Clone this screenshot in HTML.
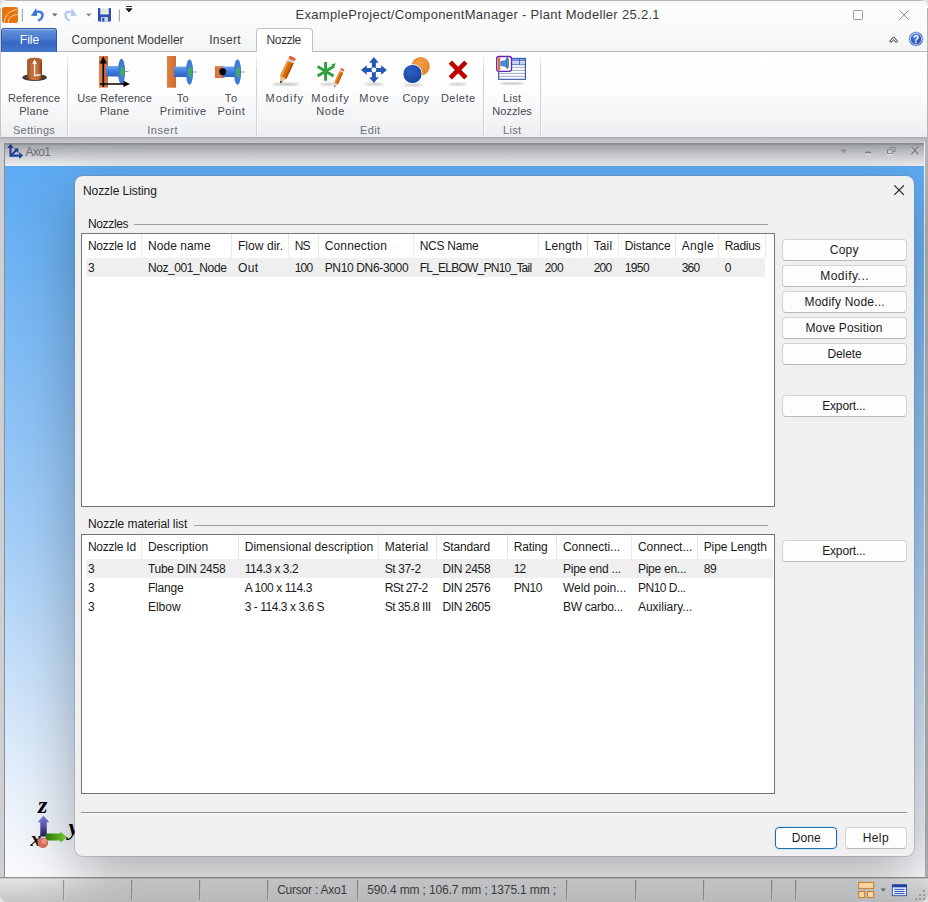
<!DOCTYPE html>
<html>
<head>
<meta charset="utf-8">
<title>Plant Modeller - Nozzle Listing</title>
<style>
*{box-sizing:border-box;margin:0;padding:0}
html,body{width:928px;height:902px;overflow:hidden;background:#dfe1e4;font-family:"Liberation Sans",sans-serif;font-size:12px;color:#1a1a1a}
.a{position:absolute}
.t{position:absolute;white-space:pre;line-height:14px;height:14px}
#win{left:0;top:0;width:928px;height:902px;overflow:hidden;border-radius:8px}
#titlebar{left:0;top:0;width:928px;height:29px;background:linear-gradient(#f6f6f6,#fcfcfc 25%,#fafafa)}
#topline{left:0;top:0;width:928px;height:1px;background:#b5b5b5}
#tabrow{left:0;top:29px;width:928px;height:22px;background:linear-gradient(#fafafa,#f3f4f6)}
#tabline{left:0;top:51px;width:928px;height:1px;background:#b6b9bd}
#filetab{left:1px;top:28px;width:56px;height:23.500px;border-radius:3px 3px 0 0;background:linear-gradient(#6593dc,#4a7cd0 40%,#3766c0 60%,#4377cd);border:1px solid #2f5aa6;border-bottom:none;box-shadow:inset 0 1px 0 rgba(255,255,255,.35)}
#acttab{left:256px;top:28px;width:57px;height:24px;border-radius:4px 4px 0 0;background:#fff;border:1px solid #bfc3c9;border-bottom:none}
#ribbon{left:0;top:52px;width:928px;height:85px;background:linear-gradient(#ffffff,#fdfdfe 45%,#f3f4f6 80%,#eceef1)}
.sep{width:2px;top:53px;height:83px;background:linear-gradient(90deg,#d0d3d7 50%,#fbfbfc 50%);-webkit-mask-image:linear-gradient(transparent,#000 25%);mask-image:linear-gradient(transparent,#000 25%)}
#band{left:0;top:137px;width:928px;height:6px;background:linear-gradient(#a4a6a9,#bdbfc2 35%,#c8cacd)}
#frame{left:0;top:143px;width:928px;height:735px;background:#cdcfd2}
#fl{left:4px;top:143px;width:1px;height:734px;background:#8a8d91}
#fr{left:923.5px;top:142px;width:1.8px;height:735px;background:#f3f4f5}
#frr{left:925.3px;top:137px;width:2.7px;height:740px;background:#b2b4b6}
#fl0{left:0;top:8px;width:1px;height:130px;background:#c6c6c6}
#fr2{left:927px;top:8px;width:1px;height:130px;background:#b4b4b4}
#axobar{left:5px;top:143px;width:918.5px;height:23px;background:linear-gradient(#83868a,#8f9296 6%,#a6a9ad 12%,#c2c4c8 45%,#dedfe2 78%,#ebecee)}
#view{left:5px;top:166px;width:918.5px;height:711px;background:linear-gradient(#5eabf3,#64aef3 6%,#a3cdf7 52%,#ebf2fb 90%,#fafbfd)}
#clip{left:5px;top:166px;width:918.5px;height:711px}
#dlg{left:70px;top:10px;width:838.5px;height:680px;background:#f0f0f0;border-radius:8px;box-shadow:0 0 0 1px rgba(110,120,135,.30),0 22px 60px rgba(0,0,0,.31)}
.list{background:#fff;border:1px solid #767676}
.hsep{width:1px;background:#e9e9e9}
.hl{background:#efefef;border-radius:2px}
.gline{height:1px;background:#a0a0a0}
.btn{background:#fdfdfd;border:1px solid #d2d2d2;border-bottom-color:#b9b9b9;border-radius:4px;height:22px}
.btn.def{border:1px solid #2a6da6;box-shadow:0 0 0 1px rgba(185,232,255,.75)}
#vb{left:5px;top:875.5px;width:918.5px;height:1.5px;background:rgba(255,255,255,.4)}
#status{left:0;top:877px;width:928px;height:25px;background:linear-gradient(#8f9194,#909295 4%,#e3e5e7 7%,#d3d5d7 50%,#c3c5c7)}
.ssep{top:880px;width:2px;height:20px;background:linear-gradient(90deg,#96999c 50%,#d2d4d6 50%)}
</style>
</head>
<body>
<div class="a" id="win">
<div class="a" id="titlebar"></div>
<div class="a" id="tabrow"></div>
<div class="a" id="tabline"></div>
<div class="a" id="filetab"></div>
<div class="a" id="acttab"></div>
<div class="a" id="ribbon"></div>
<div class="a sep" style="left:67px"></div>
<div class="a sep" style="left:256px"></div>
<div class="a sep" style="left:483px"></div>
<div class="a sep" style="left:540px"></div>
<div class="a" id="band"></div>
<div class="a" id="frame"></div>
<div class="a" id="fl"></div><div class="a" id="fr"></div><div class="a" id="fr2"></div><div class="a" id="frr"></div><div class="a" id="fl0"></div>
<div class="a" id="axobar"></div>
<div class="a" id="view"></div>
<svg class="a" style="left:0;top:780px" width="100" height="90" viewBox="0 780 100 90">
<defs>
<linearGradient id="gZ" x1="0" y1="0" x2="0" y2="1"><stop offset="0" stop-color="#8a80e0"/><stop offset=".5" stop-color="#5a52b0"/><stop offset="1" stop-color="#1e1a50"/></linearGradient>
<linearGradient id="gY" x1="0" y1="0" x2="1" y2="0"><stop offset="0" stop-color="#2e7a0a"/><stop offset=".6" stop-color="#5cb820"/><stop offset="1" stop-color="#9ade4a"/></linearGradient>
</defs>
<text x="38" y="812.900" font-family="Liberation Serif, serif" font-style="italic" font-weight="bold" font-size="24" fill="#000">z</text>
<path d="M43.500 815.600l5.700 6.700h-2.400v14.200h-6.500v-14.200h-2.500z" fill="url(#gZ)"/>
<text x="30.500" y="846" font-family="Liberation Serif, serif" font-style="italic" font-weight="bold" font-size="22" fill="#1a0a0a">x</text>
<path d="M45.600 833.500h14.700v-1.800l7 5.600-7 5.500v-2.400H45.600z" fill="url(#gY)"/>
<text x="68.500" y="835.200" font-family="Liberation Serif, serif" font-style="italic" font-weight="bold" font-size="24" fill="#000">y</text>
<circle cx="42.800" cy="842.800" r="5.300" fill="#d8705e"/>
<circle cx="44" cy="841.300" r="2.800" fill="#f09a84"/>
</svg>


<div class="a" id="vb"></div>
<div class="a" id="status"></div>
<div class="a ssep" style="left:63px"></div>
<div class="a ssep" style="left:131px"></div>
<div class="a ssep" style="left:199px"></div>
<div class="a ssep" style="left:267px"></div>
<div class="a ssep" style="left:357px"></div>
<div class="a ssep" style="left:566px"></div>
<div class="a ssep" style="left:634.5px"></div>
<div class="a ssep" style="left:702.5px"></div>
<div class="a ssep" style="left:770.5px"></div>
<div class="a ssep" style="left:795px"></div>
<div class="a" id="clip"><div class="a" id="dlg"></div></div>

<!-- Nozzles group -->
<div class="a gline" style="left:134px;top:224px;width:634px"></div>
<div class="a list" style="left:81px;top:233px;width:694px;height:274px"></div>
<div class="a hl" style="left:86px;top:258px;width:679px;height:19px"></div>
<div class="a hsep" style="left:141px;top:234px;height:24px"></div>
<div class="a hsep" style="left:231px;top:234px;height:24px"></div>
<div class="a hsep" style="left:288px;top:234px;height:24px"></div>
<div class="a hsep" style="left:318px;top:234px;height:24px"></div>
<div class="a hsep" style="left:413px;top:234px;height:24px"></div>
<div class="a hsep" style="left:538px;top:234px;height:24px"></div>
<div class="a hsep" style="left:587px;top:234px;height:24px"></div>
<div class="a hsep" style="left:618px;top:234px;height:24px"></div>
<div class="a hsep" style="left:675px;top:234px;height:24px"></div>
<div class="a hsep" style="left:718px;top:234px;height:24px"></div>
<div class="a hsep" style="left:765px;top:234px;height:24px"></div>

<!-- Nozzle material list group -->
<div class="a gline" style="left:193.5px;top:525px;width:574.5px"></div>
<div class="a list" style="left:81px;top:534px;width:694px;height:260px"></div>
<div class="a hl" style="left:86px;top:559px;width:687px;height:19px"></div>
<div class="a hsep" style="left:141px;top:535px;height:23.5px"></div>
<div class="a hsep" style="left:238px;top:535px;height:23.5px"></div>
<div class="a hsep" style="left:378px;top:535px;height:23.5px"></div>
<div class="a hsep" style="left:436px;top:535px;height:23.5px"></div>
<div class="a hsep" style="left:507px;top:535px;height:23.5px"></div>
<div class="a hsep" style="left:556px;top:535px;height:23.5px"></div>
<div class="a hsep" style="left:631px;top:535px;height:23.5px"></div>
<div class="a hsep" style="left:697px;top:535px;height:23.5px"></div>

<!-- buttons -->
<div class="a btn" style="left:782px;top:239px;width:125px"></div>
<div class="a btn" style="left:782px;top:265px;width:125px"></div>
<div class="a btn" style="left:782px;top:291px;width:125px"></div>
<div class="a btn" style="left:782px;top:317px;width:125px"></div>
<div class="a btn" style="left:782px;top:343px;width:125px"></div>
<div class="a btn" style="left:782px;top:395px;width:125px"></div>
<div class="a btn" style="left:782px;top:540px;width:125px"></div>
<div class="a gline" style="left:81px;top:812px;width:826px;background:#8e8e8e"></div>
<div class="a gline" style="left:81px;top:813px;width:826px;background:#fbfbfb"></div>
<div class="a btn def" style="left:775px;top:827px;width:62px;height:22px"></div>
<div class="a btn" style="left:845px;top:827px;width:62px;height:22px"></div>

<svg class="a" style="left:0;top:0" width="928" height="902" viewBox="0 0 928 902">
<defs>
<linearGradient id="gPipe" x1="0" y1="0" x2="0" y2="1"><stop offset="0" stop-color="#6fa2ee"/><stop offset=".45" stop-color="#3f7fe0"/><stop offset="1" stop-color="#2f62c0"/></linearGradient>
<linearGradient id="gOr" x1="0" y1="0" x2="1" y2="0"><stop offset="0" stop-color="#e08044"/><stop offset="1" stop-color="#cf6a32"/></linearGradient>
<linearGradient id="gCyl" x1="0" y1="0" x2="1" y2="0"><stop offset="0" stop-color="#8a4a22"/><stop offset=".3" stop-color="#c8723a"/><stop offset=".7" stop-color="#c87038"/><stop offset="1" stop-color="#7a3e1c"/></linearGradient>
<linearGradient id="gZ" x1="0" y1="0" x2="0" y2="1"><stop offset="0" stop-color="#8a80e0"/><stop offset=".5" stop-color="#5a52b0"/><stop offset="1" stop-color="#1e1a50"/></linearGradient>
<linearGradient id="gY" x1="0" y1="0" x2="1" y2="0"><stop offset="0" stop-color="#2e7a0a"/><stop offset=".6" stop-color="#5cb820"/><stop offset="1" stop-color="#9ade4a"/></linearGradient>
<radialGradient id="gHelp" cx=".4" cy=".3" r=".8"><stop offset="0" stop-color="#4a7fe8"/><stop offset="1" stop-color="#123a9c"/></radialGradient>
<radialGradient id="gBlue" cx=".4" cy=".35" r=".8"><stop offset="0" stop-color="#2c62c4"/><stop offset="1" stop-color="#163e94"/></radialGradient>
<radialGradient id="gOrC" cx=".45" cy=".35" r=".8"><stop offset="0" stop-color="#f6a04a"/><stop offset="1" stop-color="#e07a1c"/></radialGradient>
<filter id="blur1"><feGaussianBlur stdDeviation="0.9"/></filter>
<g id="nozzle">
  <rect x="9" y="10.6" width="13" height="10.4" fill="url(#gPipe)"/>
  <ellipse cx="24.5" cy="16" rx="3.6" ry="12.8" fill="#3f7ad8"/>
  <ellipse cx="25.3" cy="16" rx="1.8" ry="5.6" fill="#3fb05a"/>
  <path d="M28 16h3.6" stroke="#8fae7a" stroke-width="1"/>
</g>
</defs>

<!-- quick access toolbar -->
<rect x="2" y="7" width="16" height="16" rx="2.2" fill="#e8740e"/>
<path d="M4.2 22.5C4.6 15.5 9 10.8 16.5 9.6M8.2 22.5c.3-4.6 3.2-7.4 9.3-8" fill="none" stroke="#ffd9a8" stroke-width="1" stroke-linecap="round"/>
<path d="M22.3 9v12.5" stroke="#9a9a9a" stroke-width="1"/>
<path d="M119.3 9.5v12" stroke="#9a9a9a" stroke-width="1"/>
<path d="M30.900 15.700l5.300-7.600.9 7.900z" fill="#3873da"/>
<path d="M35.600 12.300c3.900-1.800 7.100.2 6.900 3.200-.1 2.100-1.400 3.700-3.600 4.800" stroke="#3b76dc" stroke-width="2.400" fill="none" stroke-linecap="round"/>
<path d="M77 15.700l-5.300-7.600-.9 7.900z" fill="#b4c9f0"/>
<path d="M72.300 12.300c-3.900-1.800-7.100.2-6.900 3.200.1 2.100 1.400 3.700 3.600 4.800" stroke="#b9cdf2" stroke-width="2.400" fill="none" stroke-linecap="round"/>
<path d="M52 13.400h5.600l-2.800 3z" fill="#6b6b6b"/>
<path d="M86 13.400h5.600l-2.800 3z" fill="#8b8b8b"/>
<rect x="98" y="8" width="13" height="13.600" rx=".8" fill="#2f4fb0"/>
<rect x="100.300" y="8" width="8.400" height="6.400" fill="#f2f2ee"/>
<path d="M100.300 10h8.400M100.300 12h8.400" stroke="#c9d2a8" stroke-width=".7"/>
<rect x="101" y="17" width="7" height="4.600" fill="#c9d3ee"/>
<rect x="102.300" y="17.800" width="2" height="3.800" fill="#2f4fb0"/>
<path d="M126 6.500h6M126 8.700h6l-3 3.300z" fill="#222" stroke="#222" stroke-width=".9"/>

<!-- window buttons -->
<rect x="853.500" y="10.500" width="9" height="9" rx=".8" fill="none" stroke="#9c9c9c" stroke-width="1"/>
<path d="M899.300 10.200l9.600 9.600M908.900 10.200l-9.600 9.600" stroke="#8a8a8a" stroke-width="1"/>
<path d="M889.600 41.200l4-4.300 4 4.300-1.300 1.300-2.700-2.600-2.700 2.600z" fill="#fff" stroke="#222" stroke-width="1" stroke-linejoin="round"/>
<circle cx="916" cy="39" r="7" fill="url(#gHelp)" stroke="#9db8ee" stroke-width=".8"/>
<circle cx="916" cy="39" r="5.700" fill="none" stroke="#e8eefc" stroke-width=".8"/>
<text x="916" y="43" text-anchor="middle" font-family="Liberation Sans, sans-serif" font-weight="bold" font-size="10.500" fill="#fff">?</text>

<!-- Reference plane (hat) -->
<ellipse cx="34.600" cy="77.500" rx="12.300" ry="3.400" fill="#3c3c3c"/>
<path d="M27.200 60.500a7.400 2.700 0 0 1 14.800 0v17a7.400 2.700 0 0 1-14.800 0z" fill="url(#gCyl)"/>
<ellipse cx="34.600" cy="60.500" rx="7.400" ry="2.700" fill="#b0622e"/>
<path d="M34.600 76.300V63M34.600 75.700l6-1" stroke="#fff" stroke-width="1.200" fill="none"/>
<path d="M32.200 63.800l2.400-4.400 2.400 4.400z" fill="#fff"/>

<!-- Use reference plane -->
<rect x="99" y="56" width="9" height="31.600" fill="url(#gOr)"/>
<use href="#nozzle" x="97" y="55.500"/>
<path d="M103.300 87V61M100 84h25" stroke="#000" stroke-width="1.700"/>
<path d="M99.600 63.600l3.600-7.400 3.600 7.400z" fill="#000"/>
<path d="M123.400 80.800l6.600 3.200-6.600 3z" fill="#000"/>

<!-- To primitive -->
<rect x="167" y="56" width="9" height="31.700" fill="url(#gOr)"/>
<use href="#nozzle" x="165" y="56"/>
<!-- To point -->
<rect x="215" y="66.200" width="9.500" height="11.800" fill="#dc7440"/>
<use href="#nozzle" x="213" y="56"/>
<circle cx="222.700" cy="71.700" r="3.400" fill="#000"/>

<!-- Modify pencil -->
<ellipse cx="286" cy="84.300" rx="13.500" ry="1.300" fill="#b9b9b9" filter="url(#blur1)"/>
<g transform="translate(280.300 83.600) rotate(25.200)">
  <path d="M0 0l-3.500-7h7z" fill="#e6c08e"/><path d="M0 0l-1.200-2.500h2.400z" fill="#1a1a1a"/>
  <rect x="-3.500" y="-24" width="7" height="17" fill="#d36c0c"/>
  <rect x="-3.500" y="-24" width="2" height="17" fill="#ee9838"/><rect x="1.700" y="-24" width="1.800" height="17" fill="#a85206"/>
  <rect x="-3.500" y="-26.200" width="7" height="2.200" fill="#d4d4d4"/>
  <rect x="-3.500" y="-29.500" width="7" height="3.300" rx="1.200" fill="#e85a3a"/>
</g>
<!-- Modify node -->
<ellipse cx="328" cy="84.300" rx="8" ry="1.200" fill="#c4c4c4" filter="url(#blur1)"/>
<g stroke="#2fa03a" stroke-width="2.900" stroke-linecap="butt"><path d="M325.600 62v18.700M317.600 66.500l16 9.400M317.600 75.900l16-9.400"/></g>
<path d="M331.200 64.300l4.400-1 -1.200 4.200z" fill="#2fa03a"/>
<g transform="translate(334.400 87.200) rotate(24.500) scale(.7)">
  <path d="M0 0l-2.800-6h5.600z" fill="#e9c79a"/><path d="M0 0l-1-2.200h2z" fill="#222"/>
  <rect x="-2.800" y="-24" width="5.600" height="18" fill="#d9720f"/>
  <rect x="-2.800" y="-24" width="1.700" height="18" fill="#f09a3a"/><rect x="1.400" y="-24" width="1.400" height="18" fill="#b65a08"/>
  <rect x="-2.800" y="-26" width="5.600" height="2" fill="#d8d8d8"/>
  <rect x="-2.800" y="-29" width="5.600" height="3" rx="1" fill="#e85a3a"/>
</g>
<!-- Move -->
<ellipse cx="374" cy="84.300" rx="10" ry="1.200" fill="#c4c4c4" filter="url(#blur1)"/>
<g fill="#2858b6">
<path d="M373.900 57l4.800 5.800h-2.800v6.200h-4v-6.200h-2.800z"/>
<path d="M373.900 83l4.800-5.800h-2.800v-6.200h-4v6.200h-2.800z"/>
<path d="M361 70l5.800-4.800v2.800h6.200v4h-6.200v2.800z"/>
<path d="M386.900 70l-5.800-4.800v2.800h-6.200v4h6.200v2.800z"/>
</g>
<circle cx="373.900" cy="70" r="2.400" fill="#fff"/>
<!-- Copy -->
<ellipse cx="413" cy="85" rx="10" ry="1.200" fill="#c4c4c4" filter="url(#blur1)"/>
<circle cx="420.600" cy="66.300" r="9.200" fill="url(#gOrC)"/>
<circle cx="412.500" cy="74" r="9.600" fill="url(#gBlue)" stroke="#fff" stroke-width=".9"/>
<!-- Delete -->
<ellipse cx="458" cy="84.300" rx="9" ry="1.200" fill="#c4c4c4" filter="url(#blur1)"/>
<path d="M450.300 62.200l15.600 15.600M465.900 62.200l-15.600 15.600" stroke="#c00000" stroke-width="4.600"/>
<!-- List nozzles -->
<ellipse cx="512" cy="83.600" rx="12" ry="1.100" fill="#bdbdbd" filter="url(#blur1)"/>
<rect x="498.700" y="58.400" width="26.700" height="20.900" fill="#fff" stroke="#2f4fa4" stroke-width="1.100"/>
<rect x="499.200" y="58.900" width="25.700" height="1.100" fill="#8fa8ee"/>
<rect x="512" y="61.200" width="7" height="2.800" fill="#c2d0f6"/><rect x="520" y="61.200" width="5" height="2.800" fill="#c2d0f6"/>
<path d="M511 60.400h14.400M498.700 64.700h26.700M519.500 58.400v6.300" stroke="#2f4fa4" stroke-width=".8"/>
<path d="M499 67.400h26M499 70.400h26M499 73.400h26M499 76.400h26" stroke="#8892b8" stroke-width=".8"/>
<rect x="496.700" y="56.500" width="14.800" height="14.800" rx="2.200" fill="#fff" stroke="#6a22b4" stroke-width="1.300"/>
<rect x="497.700" y="57.600" width="2.600" height="12.600" fill="#d8763e"/>
<path d="M500.300 61.200l5.500-1.200v7l-5.500-1.200z" fill="#4a86e0"/>
<ellipse cx="507.200" cy="63" rx="1.900" ry="5.900" fill="#3f74d0"/>
<ellipse cx="507.700" cy="63" rx=".8" ry="3.600" fill="#3fae5e"/>

<!-- Axo icon -->
<g fill="#1e3f94" stroke="#1e3f94">
<path d="M10.500 156.200V147M9.500 155.600H20" stroke-width="2.100" fill="none"/>
<path d="M10.500 156l7-7" stroke-width="1.900" fill="none"/>
<path d="M7.200 148l3.300-4.200 3.300 4.200z" stroke="none"/>
<path d="M19.200 152.300l4 3.300-4 3.300z" stroke="none"/>
<path d="M13.800 148.600h4.600v4.600z" stroke="none"/>
</g>
<!-- Axo bar buttons -->
<path d="M840.600 149.300h6.200l-3.100 4.300z" fill="#8b8f94"/>
<rect x="865.200" y="151.400" width="6" height="2.100" rx=".6" fill="#82868b"/>
<rect x="865.200" y="153.800" width="6" height="1" fill="#eceded"/>
<rect x="890" y="147.500" width="5" height="4" fill="none" stroke="#84888d" stroke-width="1"/>
<rect x="887.500" y="150" width="5" height="3.500" fill="#cfd1d4" stroke="#84888d" stroke-width="1"/>
<rect x="887" y="154.200" width="6" height="1" fill="#eceded"/>
<path d="M911.400 148l7 7.400M918.400 148l-7 7.400" stroke="#eceded" stroke-width="1.300"/>
<path d="M911.400 147l7 7.400M918.400 147l-7 7.400" stroke="#7c8086" stroke-width="1.500"/>

<!-- dialog close -->
<path d="M894.300 185.300l9.600 9.600M903.900 185.300l-9.600 9.600" stroke="#1a1a1a" stroke-width="1.100"/>

<!-- status icons -->
<g fill="#fcd7a4" stroke="#c97a1e" stroke-width="1">
<rect x="858.700" y="882.400" width="15" height="6"/>
<rect x="858.700" y="891.500" width="6" height="6"/>
<rect x="867.500" y="891.500" width="6.200" height="6"/>
</g>
<path d="M880.600 888.400h5.400l-2.700 3.300z" fill="#6a6a6a"/>
<rect x="892.300" y="884.700" width="14.200" height="11" fill="#e4eafc" stroke="#2a4aa0" stroke-width=".9"/>
<rect x="892.300" y="884.700" width="14.200" height="2.600" fill="#1f3f94"/>
<path d="M894.300 889.400h10.200M894.300 891.500h10.200M894.300 893.600h10.200" stroke="#2f55b8" stroke-width="1"/>
<g fill="#9a9ca0"><rect x="923" y="890" width="2" height="2"/><rect x="919" y="894" width="2" height="2"/><rect x="923" y="894" width="2" height="2"/><rect x="915" y="898" width="2" height="2"/><rect x="919" y="898" width="2" height="2"/><rect x="923" y="898" width="2" height="2"/></g>
</svg>

<div class="t" style="left:295.50px;top:7.50px;font-size:13px;color:#3b3b3b;letter-spacing:0.306px;">ExampleProject/ComponentManager - Plant Modeller 25.2.1</div>
<div class="t" style="left:19.80px;top:32.83px;font-size:12px;color:#ffffff;letter-spacing:0.019px;">File</div>
<div class="t" style="left:71.60px;top:32.83px;font-size:12px;color:#383838;letter-spacing:0.035px;">Component Modeller</div>
<div class="t" style="left:209.20px;top:32.83px;font-size:12px;color:#383838;letter-spacing:0.277px;">Insert</div>
<div class="t" style="left:266.60px;top:32.83px;font-size:12px;color:#383838;letter-spacing:-0.397px;">Nozzle</div>
<div class="t" style="left:7.95px;top:91.16px;font-size:11px;color:#464a50;letter-spacing:0.173px;">Reference</div>
<div class="t" style="left:19.20px;top:104.16px;font-size:11px;color:#464a50;letter-spacing:0.315px;">Plane</div>
<div class="t" style="left:77.20px;top:91.16px;font-size:11px;color:#464a50;letter-spacing:0.106px;">Use Reference</div>
<div class="t" style="left:99.70px;top:104.16px;font-size:11px;color:#464a50;letter-spacing:0.315px;">Plane</div>
<div class="t" style="left:176.70px;top:91.16px;font-size:11px;color:#464a50;letter-spacing:0.275px;">To</div>
<div class="t" style="left:159.70px;top:104.16px;font-size:11px;color:#464a50;letter-spacing:0.529px;">Primitive</div>
<div class="t" style="left:224.70px;top:91.16px;font-size:11px;color:#464a50;letter-spacing:0.775px;">To</div>
<div class="t" style="left:217.45px;top:104.16px;font-size:11px;color:#464a50;letter-spacing:0.580px;">Point</div>
<div class="t" style="left:265.45px;top:91.16px;font-size:11px;color:#464a50;letter-spacing:1.049px;">Modify</div>
<div class="t" style="left:311.20px;top:91.16px;font-size:11px;color:#464a50;letter-spacing:1.049px;">Modify</div>
<div class="t" style="left:316.20px;top:104.16px;font-size:11px;color:#464a50;letter-spacing:0.618px;">Node</div>
<div class="t" style="left:359.20px;top:91.16px;font-size:11px;color:#464a50;letter-spacing:0.831px;">Move</div>
<div class="t" style="left:402.45px;top:91.16px;font-size:11px;color:#464a50;letter-spacing:0.404px;">Copy</div>
<div class="t" style="left:440.95px;top:91.16px;font-size:11px;color:#464a50;letter-spacing:0.471px;">Delete</div>
<div class="t" style="left:502.95px;top:91.16px;font-size:11px;color:#464a50;letter-spacing:0.342px;">List</div>
<div class="t" style="left:492.20px;top:104.16px;font-size:11px;color:#464a50;letter-spacing:0.087px;">Nozzles</div>
<div class="t" style="left:12.95px;top:123.16px;font-size:11px;color:#6c7178;letter-spacing:0.307px;">Settings</div>
<div class="t" style="left:147.20px;top:123.16px;font-size:11px;color:#6c7178;letter-spacing:0.577px;">Insert</div>
<div class="t" style="left:359.95px;top:123.16px;font-size:11px;color:#6c7178;letter-spacing:0.394px;">Edit</div>
<div class="t" style="left:502.95px;top:123.16px;font-size:11px;color:#6c7178;letter-spacing:0.342px;">List</div>
<div class="t" style="left:25.40px;top:144.83px;font-size:12px;color:#6a6d72;letter-spacing:-0.586px;">Axo1</div>
<div class="t" style="left:82.95px;top:183.83px;font-size:12px;color:#1a1a1a;letter-spacing:-0.062px;">Nozzle Listing</div>
<div class="t" style="left:87.95px;top:216.83px;font-size:12px;color:#1a1a1a;letter-spacing:-0.340px;">Nozzles</div>
<div class="t" style="left:87.95px;top:238.83px;font-size:12px;color:#1a1a1a;letter-spacing:-0.235px;">Nozzle Id</div>
<div class="t" style="left:147.95px;top:238.83px;font-size:12px;color:#1a1a1a;letter-spacing:0.075px;">Node name</div>
<div class="t" style="left:237.95px;top:238.83px;font-size:12px;color:#1a1a1a;letter-spacing:0.058px;">Flow dir.</div>
<div class="t" style="left:294.70px;top:238.83px;font-size:12px;color:#1a1a1a;letter-spacing:-0.772px;">NS</div>
<div class="t" style="left:324.70px;top:238.83px;font-size:12px;color:#1a1a1a;letter-spacing:0.159px;">Connection</div>
<div class="t" style="left:419.70px;top:238.83px;font-size:12px;color:#1a1a1a;letter-spacing:-0.255px;">NCS Name</div>
<div class="t" style="left:544.70px;top:238.83px;font-size:12px;color:#1a1a1a;letter-spacing:0.089px;">Length</div>
<div class="t" style="left:593.70px;top:238.83px;font-size:12px;color:#1a1a1a;letter-spacing:0.128px;">Tail</div>
<div class="t" style="left:624.70px;top:238.83px;font-size:12px;color:#1a1a1a;letter-spacing:-0.113px;">Distance</div>
<div class="t" style="left:681.70px;top:238.83px;font-size:12px;color:#1a1a1a;letter-spacing:0.299px;">Angle</div>
<div class="t" style="left:724.70px;top:238.83px;font-size:12px;color:#1a1a1a;letter-spacing:-0.292px;">Radius</div>
<div class="t" style="left:87.95px;top:260.83px;font-size:12px;color:#1a1a1a;letter-spacing:0.463px;">3</div>
<div class="t" style="left:147.95px;top:260.83px;font-size:12px;color:#1a1a1a;letter-spacing:-0.410px;">Noz_001_Node</div>
<div class="t" style="left:237.95px;top:260.83px;font-size:12px;color:#1a1a1a;letter-spacing:0.403px;">Out</div>
<div class="t" style="left:294.70px;top:260.83px;font-size:12px;color:#1a1a1a;letter-spacing:-0.816px;">100</div>
<div class="t" style="left:324.70px;top:260.83px;font-size:12px;color:#1a1a1a;letter-spacing:-0.347px;">PN10 DN6-3000</div>
<div class="t" style="left:419.70px;top:260.83px;font-size:12px;color:#1a1a1a;letter-spacing:-0.764px;">FL_ELBOW_PN10_Tail</div>
<div class="t" style="left:544.70px;top:260.83px;font-size:12px;color:#1a1a1a;letter-spacing:-0.566px;">200</div>
<div class="t" style="left:593.70px;top:260.83px;font-size:12px;color:#1a1a1a;letter-spacing:-0.816px;">200</div>
<div class="t" style="left:624.70px;top:260.83px;font-size:12px;color:#1a1a1a;letter-spacing:-0.601px;">1950</div>
<div class="t" style="left:681.70px;top:260.83px;font-size:12px;color:#1a1a1a;letter-spacing:-0.816px;">360</div>
<div class="t" style="left:724.70px;top:260.83px;font-size:12px;color:#1a1a1a;letter-spacing:0.713px;">0</div>
<div class="t" style="left:87.95px;top:516.83px;font-size:12px;color:#1a1a1a;letter-spacing:-0.069px;">Nozzle material list</div>
<div class="t" style="left:87.95px;top:539.83px;font-size:12px;color:#1a1a1a;letter-spacing:-0.235px;">Nozzle Id</div>
<div class="t" style="left:147.95px;top:539.83px;font-size:12px;color:#1a1a1a;letter-spacing:0.012px;">Description</div>
<div class="t" style="left:244.70px;top:539.83px;font-size:12px;color:#1a1a1a;letter-spacing:0.045px;">Dimensional description</div>
<div class="t" style="left:384.70px;top:539.83px;font-size:12px;color:#1a1a1a;letter-spacing:0.102px;">Material</div>
<div class="t" style="left:442.45px;top:539.83px;font-size:12px;color:#1a1a1a;letter-spacing:-0.150px;">Standard</div>
<div class="t" style="left:513.70px;top:539.83px;font-size:12px;color:#1a1a1a;letter-spacing:-0.158px;">Rating</div>
<div class="t" style="left:562.95px;top:539.83px;font-size:12px;color:#1a1a1a;letter-spacing:-0.023px;">Connecti...</div>
<div class="t" style="left:637.95px;top:539.83px;font-size:12px;color:#1a1a1a;letter-spacing:-0.034px;">Connect...</div>
<div class="t" style="left:703.70px;top:539.83px;font-size:12px;color:#1a1a1a;letter-spacing:-0.091px;">Pipe Length</div>
<div class="t" style="left:87.95px;top:561.83px;font-size:12px;color:#1a1a1a;letter-spacing:0.463px;">3</div>
<div class="t" style="left:147.95px;top:561.83px;font-size:12px;color:#1a1a1a;letter-spacing:-0.274px;">Tube DIN 2458</div>
<div class="t" style="left:244.70px;top:561.83px;font-size:12px;color:#1a1a1a;letter-spacing:-0.460px;">114.3 x 3.2</div>
<div class="t" style="left:384.70px;top:561.83px;font-size:12px;color:#1a1a1a;letter-spacing:-0.384px;">St 37-2</div>
<div class="t" style="left:442.45px;top:561.83px;font-size:12px;color:#1a1a1a;letter-spacing:-0.365px;">DIN 2458</div>
<div class="t" style="left:513.70px;top:561.83px;font-size:12px;color:#1a1a1a;letter-spacing:-0.959px;">12</div>
<div class="t" style="left:562.95px;top:561.83px;font-size:12px;color:#1a1a1a;letter-spacing:-0.234px;">Pipe end ...</div>
<div class="t" style="left:637.95px;top:561.83px;font-size:12px;color:#1a1a1a;letter-spacing:-0.256px;">Pipe en...</div>
<div class="t" style="left:703.70px;top:561.83px;font-size:12px;color:#1a1a1a;letter-spacing:-0.459px;">89</div>
<div class="t" style="left:87.95px;top:580.83px;font-size:12px;color:#1a1a1a;letter-spacing:0.463px;">3</div>
<div class="t" style="left:147.95px;top:580.83px;font-size:12px;color:#1a1a1a;letter-spacing:-0.211px;">Flange</div>
<div class="t" style="left:244.70px;top:580.83px;font-size:12px;color:#1a1a1a;letter-spacing:-0.405px;">A 100 x 114.3</div>
<div class="t" style="left:384.70px;top:580.83px;font-size:12px;color:#1a1a1a;letter-spacing:-0.566px;">RSt 27-2</div>
<div class="t" style="left:442.45px;top:580.83px;font-size:12px;color:#1a1a1a;letter-spacing:-0.365px;">DIN 2576</div>
<div class="t" style="left:513.70px;top:580.83px;font-size:12px;color:#1a1a1a;letter-spacing:-0.460px;">PN10</div>
<div class="t" style="left:562.95px;top:580.83px;font-size:12px;color:#1a1a1a;letter-spacing:0.022px;">Weld poin...</div>
<div class="t" style="left:637.95px;top:580.83px;font-size:12px;color:#1a1a1a;letter-spacing:-0.485px;">PN10 D...</div>
<div class="t" style="left:87.95px;top:599.83px;font-size:12px;color:#1a1a1a;letter-spacing:0.463px;">3</div>
<div class="t" style="left:147.95px;top:599.83px;font-size:12px;color:#1a1a1a;letter-spacing:-0.009px;">Elbow</div>
<div class="t" style="left:244.70px;top:599.83px;font-size:12px;color:#1a1a1a;letter-spacing:-0.454px;">3 - 114.3 x 3.6 S</div>
<div class="t" style="left:384.70px;top:599.83px;font-size:12px;color:#1a1a1a;letter-spacing:-0.498px;">St 35.8 III</div>
<div class="t" style="left:442.45px;top:599.83px;font-size:12px;color:#1a1a1a;letter-spacing:-0.365px;">DIN 2605</div>
<div class="t" style="left:562.95px;top:599.83px;font-size:12px;color:#1a1a1a;letter-spacing:-0.254px;">BW carbo...</div>
<div class="t" style="left:637.95px;top:599.83px;font-size:12px;color:#1a1a1a;letter-spacing:-0.006px;">Auxiliary...</div>
<div class="t" style="left:829.70px;top:242.83px;font-size:12px;color:#1a1a1a;letter-spacing:0.295px;">Copy</div>
<div class="t" style="left:820.20px;top:268.83px;font-size:12px;color:#1a1a1a;letter-spacing:0.491px;">Modify...</div>
<div class="t" style="left:804.50px;top:294.83px;font-size:12px;color:#1a1a1a;letter-spacing:0.210px;">Modify Node...</div>
<div class="t" style="left:805.50px;top:320.83px;font-size:12px;color:#1a1a1a;letter-spacing:0.127px;">Move Position</div>
<div class="t" style="left:827.50px;top:346.83px;font-size:12px;color:#1a1a1a;letter-spacing:-0.117px;">Delete</div>
<div class="t" style="left:822.20px;top:398.83px;font-size:12px;color:#1a1a1a;letter-spacing:-0.161px;">Export...</div>
<div class="t" style="left:822.20px;top:543.83px;font-size:12px;color:#1a1a1a;letter-spacing:-0.161px;">Export...</div>
<div class="t" style="left:791.70px;top:830.83px;font-size:12px;color:#1a1a1a;letter-spacing:0.071px;">Done</div>
<div class="t" style="left:862.70px;top:830.83px;font-size:12px;color:#1a1a1a;letter-spacing:0.404px;">Help</div>
<div class="t" style="left:277.20px;top:882.83px;font-size:12px;color:#3c3c3c;letter-spacing:-0.234px;">Cursor : Axo1</div>
<div class="t" style="left:367.20px;top:882.83px;font-size:12px;color:#3c3c3c;letter-spacing:-0.141px;">590.4 mm ; 106.7 mm ; 1375.1 mm ;</div>
<div class="a" id="topline"></div>
</div>
</body>
</html>
